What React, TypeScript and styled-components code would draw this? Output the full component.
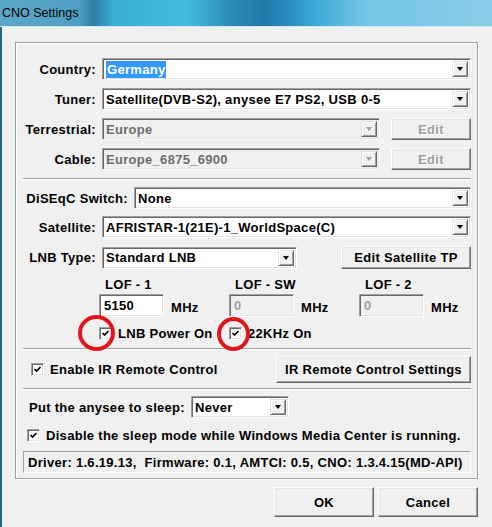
import React from "react";
import styled, { createGlobalStyle } from "styled-components";

const GlobalStyle = createGlobalStyle`
  html, body {
    margin: 0;
    padding: 0;
    background: #f0f0f0;
  }
  body {
    font-family: "Liberation Sans", Arial, sans-serif;
  }
`;

// --- window chrome ---
const Window = styled.div`
  width: 492px;
  height: 527px;
  display: flex;
  flex-direction: column;
  overflow: hidden;
  background: #f0f0f0;
`;

const TitleBar = styled.div`
  height: 26px;
  flex: none;
  display: flex;
  align-items: center;
  padding-left: 2px;
  font-size: 12.5px;
  color: #000;
  border-bottom: 1px solid #d4e9f3;
  background: linear-gradient(
    90deg,
    #5ba7c7 0%,
    #4f9fc3 16%,
    #2f7ca5 19%,
    #3aaed6 23%,
    #44bbe0 38%,
    #2a8bba 47%,
    #1f78ab 54%,
    #3aa9d7 64%,
    #74c6e6 74%,
    #88cde8 100%
  );
`;

const Body = styled.div`
  flex: 1;
  border-left: 2px solid #24668a;
  padding: 15px 14px 0 13px;
  font-size: 13px;
  font-weight: bold;
  letter-spacing: 0.3px;
  color: #000;
`;

// --- group box and layout ---
const Group = styled.div`
  display: flex;
  flex-direction: column;
  border: 1px solid #a0a0a0;
  box-shadow: inset 1px 1px #fff, 1px 1px #fff;
  padding: 15px 6px 5px 7px;
`;

const Row = styled.div<{ $mt?: number; $h?: number; $pl?: number }>`
  display: flex;
  align-items: center;
  height: ${(p) => p.$h ?? 22}px;
  margin-top: ${(p) => p.$mt ?? 0}px;
  padding-left: ${(p) => p.$pl ?? 0}px;
`;

const Label = styled.span<{ $w: number }>`
  width: ${(p) => p.$w}px;
  flex: none;
  margin-right: 6px;
  text-align: right;
  white-space: nowrap;
`;

const Separator = styled.div<{ $mt: number }>`
  margin-top: ${(p) => p.$mt}px;
  border-top: 1px solid #a0a0a0;
  border-bottom: 1px solid #fff;
`;

// --- controls ---
const Combo = styled.div<{ $w?: number; $disabled?: boolean }>`
  position: relative;
  box-sizing: border-box;
  height: 22px;
  ${(p) => (p.$w ? `width: ${p.$w}px; flex: none;` : "flex: 1;")}
  display: flex;
  align-items: center;
  padding: 0 20px 0 3px;
  background: ${(p) => (p.$disabled ? "#f0f0f0" : "#fff")};
  color: ${(p) => (p.$disabled ? "#6d6d6d" : "#000")};
  border: 1px solid;
  border-color: #a0a0a0 #fff #fff #a0a0a0;
  box-shadow: inset 1px 1px #696969, inset -1px -1px #e3e3e3;
  white-space: nowrap;
  overflow: hidden;
`;

const Selected = styled.span`
  background: #3399ff;
  color: #fff;
  padding: 1px 1px;
`;

const DropButton = styled.span<{ $disabled?: boolean }>`
  position: absolute;
  top: 2px;
  right: 2px;
  bottom: 2px;
  width: 16px;
  box-sizing: border-box;
  background: #f0f0f0;
  border: 1px solid;
  border-color: #e3e3e3 #696969 #696969 #e3e3e3;
  box-shadow: inset 1px 1px #fff, inset -1px -1px #a0a0a0;
  display: flex;
  align-items: center;
  justify-content: center;

  &::after {
    content: "";
    width: 0;
    height: 0;
    border-left: 3.5px solid transparent;
    border-right: 3.5px solid transparent;
    border-top: 4px solid ${(p) => (p.$disabled ? "#a0a0a0" : "#000")};
  }
`;

const Button = styled.button<{ $w: number; $h: number; $disabled?: boolean }>`
  width: ${(p) => p.$w}px;
  height: ${(p) => p.$h}px;
  flex: none;
  margin-left: auto;
  padding: 0;
  font-family: inherit;
  font-size: 13px;
  font-weight: bold;
  letter-spacing: inherit;
  color: ${(p) => (p.$disabled ? "#a0a0a0" : "#000")};
  text-shadow: ${(p) => (p.$disabled ? "1px 1px #fff" : "none")};
  background: #f0f0f0;
  border: 1px solid;
  border-color: #fff #696969 #696969 #fff;
  box-shadow: inset -1px -1px #a0a0a0, inset 1px 1px #e3e3e3;
  cursor: default;
`;

const TextInput = styled.div<{ $disabled?: boolean }>`
  box-sizing: border-box;
  width: 65px;
  height: 23px;
  display: flex;
  align-items: center;
  padding-left: 4px;
  background: ${(p) => (p.$disabled ? "#f0f0f0" : "#fff")};
  color: ${(p) => (p.$disabled ? "#a0a0a0" : "#000")};
  border: 1px solid;
  border-color: #a0a0a0 #fff #fff #a0a0a0;
  box-shadow: inset 1px 1px #696969, inset -1px -1px #e3e3e3;
`;

const CheckBoxFrame = styled.span`
  box-sizing: border-box;
  width: 13px;
  height: 13px;
  flex: none;
  display: flex;
  align-items: center;
  justify-content: center;
  background: #fff;
  border: 1px solid;
  border-color: #a0a0a0 #fff #fff #a0a0a0;
  box-shadow: inset 1px 1px #696969, inset -1px -1px #e3e3e3;
`;

const CheckItem = styled.div<{ $pl?: number }>`
  display: flex;
  align-items: center;
  gap: 6px;
  padding-left: ${(p) => p.$pl ?? 0}px;
  white-space: nowrap;
`;

const Check = () => (
  <CheckBoxFrame>
    <svg width="9" height="9" viewBox="0 0 9 9">
      <path d="M1.5 4 L3.5 6 L7.5 2" fill="none" stroke="#000" strokeWidth="1.7" />
    </svg>
  </CheckBoxFrame>
);

// --- LOF block ---
const LofGrid = styled.div<{ $mt: number }>`
  position: relative;
  display: grid;
  grid-template-columns: repeat(3, 130px);
  padding-left: 76px;
  margin-top: ${(p) => p.$mt}px;
`;

const LofCol = styled.div`
  display: flex;
  flex-direction: column;
`;

const LofLabel = styled.span`
  height: 16px;
  line-height: 16px;
  padding-left: 6px;
`;

const LofInputRow = styled.div`
  display: flex;
  align-items: center;
  margin-top: 1px;
`;

const Unit = styled.span`
  margin-left: 7px;
  padding-top: 3px;
`;

const CheckGrid = styled(LofGrid)`
  height: 16px;
  align-items: center;
`;

const Marker = styled.span<{ $x: number; $y: number; $w: number; $h: number }>`
  position: absolute;
  left: ${(p) => p.$x}px;
  top: ${(p) => p.$y}px;
  width: ${(p) => p.$w}px;
  height: ${(p) => p.$h}px;
  box-sizing: border-box;
  border: 4px solid #e3141c;
  border-radius: 50%;
  pointer-events: none;
`;

const StatusBox = styled.div`
  margin-top: 8px;
  height: 22px;
  box-sizing: border-box;
  display: flex;
  align-items: center;
  padding-left: 4px;
  border: 1px solid;
  border-color: #a0a0a0 #fff #fff #a0a0a0;
  white-space: pre;
`;

const Footer = styled.div`
  display: flex;
  justify-content: flex-end;
  gap: 4px;
  margin-top: 8px;

  & > button {
    margin-left: 0;
  }
`;

const App: React.FC = () => {
  return (
    <Window>
      <GlobalStyle />
      <TitleBar>CNO Settings</TitleBar>
      <Body>
        <Group>
          <Row>
            <Label $w={73}>Country:</Label>
            <Combo>
              <Selected>Germany</Selected>
              <DropButton />
            </Combo>
          </Row>
          <Row $mt={8}>
            <Label $w={73}>Tuner:</Label>
            <Combo>
              Satellite(DVB-S2), anysee E7 PS2, USB 0-5
              <DropButton />
            </Combo>
          </Row>
          <Row $mt={8}>
            <Label $w={73}>Terrestrial:</Label>
            <Combo $w={278} $disabled>
              Europe
              <DropButton $disabled />
            </Combo>
            <Button $w={80} $h={22} $disabled>
              Edit
            </Button>
          </Row>
          <Row $mt={8}>
            <Label $w={73}>Cable:</Label>
            <Combo $w={278} $disabled>
              Europe_6875_6900
              <DropButton $disabled />
            </Combo>
            <Button $w={80} $h={22} $disabled>
              Edit
            </Button>
          </Row>

          <Separator $mt={8} />

          <Row $mt={7}>
            <Label $w={105}>DiSEqC Switch:</Label>
            <Combo>
              None
              <DropButton />
            </Combo>
          </Row>
          <Row $mt={7}>
            <Label $w={73}>Satellite:</Label>
            <Combo>
              AFRISTAR-1(21E)-1_WorldSpace(C)
              <DropButton />
            </Combo>
          </Row>
          <Row $mt={8} $h={23}>
            <Label $w={73}>LNB Type:</Label>
            <Combo $w={195}>
              Standard LNB
              <DropButton />
            </Combo>
            <Button $w={130} $h={23}>
              Edit Satellite TP
            </Button>
          </Row>

          <LofGrid $mt={8}>
            <LofCol>
              <LofLabel>LOF - 1</LofLabel>
              <LofInputRow>
                <TextInput>5150</TextInput>
                <Unit>MHz</Unit>
              </LofInputRow>
            </LofCol>
            <LofCol>
              <LofLabel>LOF - SW</LofLabel>
              <LofInputRow>
                <TextInput $disabled>0</TextInput>
                <Unit>MHz</Unit>
              </LofInputRow>
            </LofCol>
            <LofCol>
              <LofLabel>LOF - 2</LofLabel>
              <LofInputRow>
                <TextInput $disabled>0</TextInput>
                <Unit>MHz</Unit>
              </LofInputRow>
            </LofCol>
          </LofGrid>

          <CheckGrid $mt={8}>
            <CheckItem>
              <Check />
              LNB Power On
            </CheckItem>
            <CheckItem>
              <Check />
              22KHz On
            </CheckItem>
            <Marker $x={55} $y={-10} $w={37} $h={36} />
            <Marker $x={194} $y={-8} $w={33} $h={34} />
          </CheckGrid>

          <Separator $mt={7} />

          <Row $mt={6} $h={27}>
            <CheckItem $pl={8}>
              <Check />
              Enable IR Remote Control
            </CheckItem>
            <Button $w={195} $h={27}>
              IR Remote Control Settings
            </Button>
          </Row>

          <Separator $mt={5} />

          <Row $mt={6}>
            <Label $w={162}>Put the anysee to sleep:</Label>
            <Combo $w={98}>
              Never
              <DropButton />
            </Combo>
          </Row>
          <Row $mt={9} $h={16}>
            <CheckItem $pl={4}>
              <Check />
              Disable the sleep mode while Windows Media Center is running.
            </CheckItem>
          </Row>

          <StatusBox>
            {"Driver: 1.6.19.13,  Firmware: 0.1, AMTCI: 0.5, CNO: 1.3.4.15(MD-API)"}
          </StatusBox>
        </Group>

        <Footer>
          <Button $w={100} $h={30}>
            OK
          </Button>
          <Button $w={100} $h={30}>
            Cancel
          </Button>
        </Footer>
      </Body>
    </Window>
  );
};

export default App;
